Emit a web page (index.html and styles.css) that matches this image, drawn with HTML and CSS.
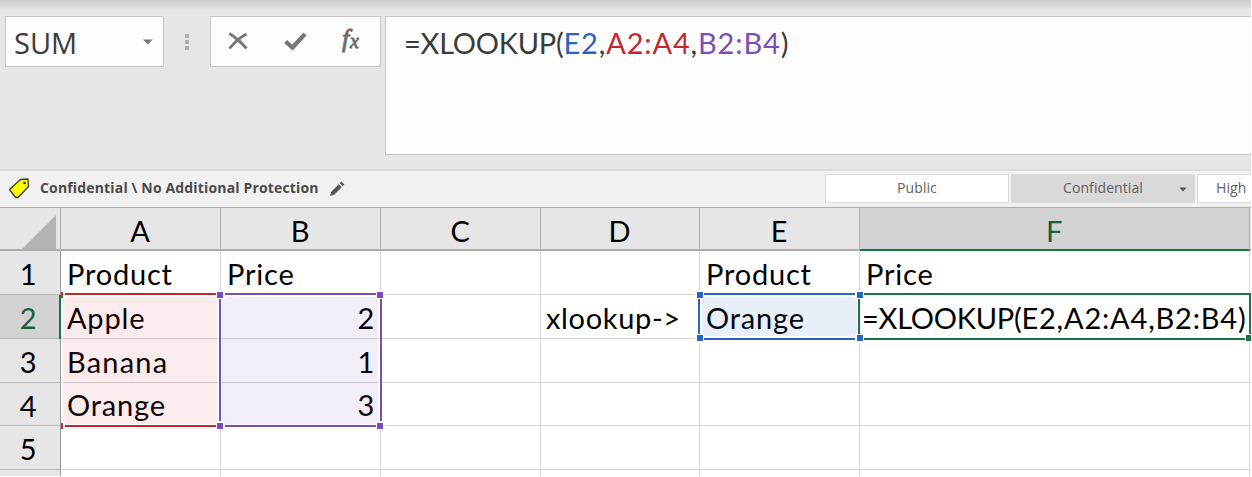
FILE: index.html
```html
<!DOCTYPE html>
<html lang="en">
<head>
<meta charset="utf-8">
<title>XLOOKUP</title>
<link rel="stylesheet" href="styles.css">
</head>
<body>
<div class="app">
  <div class="formula-area">
    <div class="name-box"><span class="name-text">SUM</span>
      <svg class="caret" width="10" height="6" viewBox="0 0 10 6"><path d="M0 0.5H9.6L4.8 5.5Z" fill="#777"/></svg>
    </div>
    <div class="dots"><i></i><i></i><i></i></div>
    <div class="fx-buttons">
      <svg width="168" height="49" viewBox="0 0 168 49">
        <g fill="none" stroke="#767676">
          <path d="M18.500 16.500Q27 22 35.500 31.500" stroke-width="2.800"/>
          <path d="M35.500 17Q26 22 18.500 31.500" stroke-width="2.800"/>
          <path d="M74.500 24.500L81.500 30.500L94 17" stroke-width="4.200"/>
        </g>
        <text class="fx-f" x="131" y="30">f</text><text class="fx-x" x="139" y="31">x</text>
      </svg>
    </div>
    <div class="formula-bar"><span class="formula"><span class="fn">=XLOOKUP(</span><span class="blue">E2</span>,<span class="red">A2:A4</span>,<span class="purple">B2:B4</span>)</span></div>
  </div>
  <div class="label-bar">
    <svg class="tag" width="22" height="22" viewBox="0 0 22 22"><path d="M1.500 11.500L12.500 1.500L20 1L20.500 8.500L10 19.500L7.500 19.500Z" fill="#ff0" stroke="#3c3c28" stroke-width="1.300" stroke-linejoin="round"/><circle cx="16.500" cy="5" r="1.300" fill="#333"/></svg>
    <span class="label-name">Confidential \ No Additional Protection</span>
    <svg class="pencil" width="16" height="16" viewBox="0 0 16 16"><path d="M1 15L2.200 10.800L9.800 3.200L12.800 6.200L5.200 13.800ZM10.700 2.300L12.500 0.600L15.400 3.500L13.700 5.300Z" fill="#555"/></svg>
    <div class="labels">
      <div class="label">Public</div>
      <div class="label active">Confidential<svg class="small-caret" width="8" height="5" viewBox="0 0 8 5"><path d="M0.500 0.500H7.500L4 4.500Z" fill="#555"/></svg></div>
      <div class="label last">High</div>
    </div>
  </div>
  <div class="sheet">
    <div class="corner"><svg width="34" height="34" viewBox="0 0 34 34"><path d="M0 34H34V0Z" fill="#b3b3b3"/></svg></div>
    <div class="col">A</div><div class="col">B</div><div class="col">C</div><div class="col">D</div><div class="col">E</div><div class="col current">F</div><div class="col"></div>
    <div class="row">1</div><div class="cell">Product</div><div class="cell">Price</div><div class="cell"></div><div class="cell"></div><div class="cell">Product</div><div class="cell">Price</div><div class="cell"></div>
    <div class="row current">2</div><div class="cell">Apple</div><div class="cell num">2</div><div class="cell"></div><div class="cell lookup">xlookup-&gt;</div><div class="cell">Orange</div><div class="cell edit"><span class="fn">=XLOOKUP(</span>E2,A2:A4,B2:B4)</div><div class="cell"></div>
    <div class="row">3</div><div class="cell wide">Banana</div><div class="cell num">1</div><div class="cell"></div><div class="cell"></div><div class="cell"></div><div class="cell"></div><div class="cell"></div>
    <div class="row">4</div><div class="cell">Orange</div><div class="cell num">3</div><div class="cell"></div><div class="cell"></div><div class="cell"></div><div class="cell"></div><div class="cell"></div>
    <div class="row">5</div><div class="cell"></div><div class="cell"></div><div class="cell"></div><div class="cell"></div><div class="cell"></div><div class="cell"></div><div class="cell"></div>
    <div class="row"></div><div class="cell"></div><div class="cell"></div><div class="cell"></div><div class="cell"></div><div class="cell"></div><div class="cell"></div><div class="cell"></div>
    <svg class="ranges" width="1252" height="270" viewBox="0 207 1252 270" shape-rendering="crispEdges">
      <g fill="none" stroke="#fff">
        <path d="M62 295.500H218M62 424.500H218M62.500 296V424M217.500 296V424M222 295.500H379M222 424.500H379M221.500 296V424M378.500 296V424M702 295.500H857M702 336.500H857M701.500 296V336M857.500 296V336"/>
      </g>
      <path d="M63 297H217V424H63Z" fill="#c8282d" fill-opacity=".09"/>
      <path d="M222 297H378V424H222Z" fill="#7344b4" fill-opacity=".09"/>
      <path d="M702 297H857V336H702Z" fill="#2864c8" fill-opacity=".1"/>
      <path d="M62 293H381V295H62ZM62 425H381V427H62Z" fill="#c1272d"/>
      <path d="M220 293H381V295H220ZM220 425H381V427H220ZM219 294H221V426H219ZM380 294H382V426H380Z" fill="#7b4db8"/>
      <path d="M860 293H1251V295H860ZM860 338H1251V340H860ZM858 296H860V338H858ZM1249 293H1251V338H1249Z" fill="#1a7340"/>
      <path d="M700 293H860V295H700ZM700 338H860V340H700ZM698 294H700V339H698Z" fill="#2a63c4"/>
      <g fill="#fff">
        <path d="M61 290H65V299H61ZM61 421H65V430H61ZM216 290H225V299H216ZM376 290H385V299H376ZM216 421H225V430H216ZM376 421H385V430H376ZM695 290H704V299H695ZM855 290H864V299H855ZM695 334H704V343H695ZM855 334H864V343H855ZM1245 334H1252V343H1245Z"/>
      </g>
      <path d="M61 292H63V298H61ZM61 423H63V429H61Z" fill="#c1272d"/>
      <path d="M217 292H223V298H217ZM377 292H383V298H377ZM217 423H223V429H217ZM377 423H383V429H377Z" fill="#7b4db8"/>
      <path d="M697 292H703V298H697ZM857 292H863V298H857ZM697 335H703V341H697ZM857 335H863V341H857Z" fill="#2a63c4"/>
      <path d="M1246 335H1252V341H1246Z" fill="#1a7340"/>
      <path d="M59 295H61V339H59Z" fill="#1a7340"/>
    </svg>
  </div>
</div>
</body>
</html>
```
FILE: styles.css
```css
* { box-sizing: border-box; }
body { margin: 0; background: #fff; overflow: hidden; }
svg { display: block; flex: none; }
.app { width: 1251px; height: 476px; overflow: hidden; display: flex; flex-direction: column; font-family: Lato, sans-serif; }
.formula-area { height: 169px; flex: none; display: flex; align-items: flex-start; padding: 16px 0 0 5px; background: linear-gradient(#cdcdcd, #d2d2d2 3px, #e6e6e6 10px); }
.name-box { width: 159px; height: 51px; display: flex; align-items: center; justify-content: space-between; padding: 0 10px 0 8px; border: 1px solid #c6c6c6; background: #fdfdfd; }
.name-text { font: 29px/49px "Open Sans", sans-serif; color: #3b3b3b; padding-top: 2px; }
.dots { width: 46px; height: 51px; padding: 18px 0 0 21px; display: flex; flex-direction: column; gap: 2px; }
.dots i { width: 4px; height: 4px; background: #b0b0b0; }
.fx-buttons { width: 171px; height: 51px; border: 1px solid #c6c6c6; background: #fdfdfd; }
.fx-f { font: italic 26px "Liberation Serif", serif; fill: #6c6c6c; stroke: #6c6c6c; stroke-width: .9px; }
.fx-x { font: italic 20px "Liberation Serif", serif; fill: #6c6c6c; stroke: #6c6c6c; stroke-width: .9px; }
.formula-bar { flex: 1; height: 139px; margin-left: 4px; padding: 5px 0 0 18px; border: 1px solid #c6c6c6; border-right: 0; background: #fdfdfd; }
.formula { font-size: 29px; line-height: 42px; letter-spacing: .85px; color: #3b3b3b; white-space: nowrap; }
.fn { letter-spacing: -.25px; }
.blue { color: #2a63c4; }
.red { color: #c1272d; }
.purple { color: #7b4db8; }
.label-bar { height: 38px; flex: none; display: flex; align-items: center; border-top: 2px solid #dcdcdc; background: #f1f1f1; font-family: "Open Sans", sans-serif; padding: 0 0 1px 8px; }
.label-name { width: 278px; margin-left: 10px; padding-bottom: 2px; font-size: 14px; font-weight: 700; letter-spacing: .16px; color: #4a4a4a; white-space: nowrap; }
.pencil { margin-left: 11px; }
.labels { margin-left: auto; width: 426px; display: flex; gap: 2px; }
.label { width: 184px; flex: none; height: 29px; position: relative; display: flex; align-items: center; justify-content: center; padding-bottom: 2px; border: 1px solid #dcdcdc; background: #fff; color: #5f5f5f; font-size: 14px; letter-spacing: .08px; }
.label.active { background: #d9d9d9; }
.label.last { justify-content: flex-start; width: 55px; padding-left: 18px; }
.small-caret { position: absolute; right: 7px; top: 12px; }
.sheet { position: relative; height: 270px; flex: none; display: grid; grid-template-columns: 61px 160px 160px 160px 159px 160px 390px 2px; grid-template-rows: 44px 44px 44px 44px 43px 44px 7px; font-size: 29px; letter-spacing: .8px; color: #000; overflow: hidden; }
.corner, .col { border-top: 1px solid #a6abb5; border-right: 1px solid #ababab; border-bottom: 2px solid #ababab; background: #e6e6e6; }
.corner { padding: 7px 0 0 22px; }
.col { display: flex; justify-content: center; align-items: center; padding-top: 4px; }
.col.current { background: #d2d2d2; color: #17603a; border-bottom-color: #1a7340; }
.row { display: flex; justify-content: center; align-items: center; padding: 2px 3px 0 0; border-right: 1px solid #999; border-bottom: 1px solid #b8b8b8; background: #e6e6e6; overflow: hidden; }
.row.current { background: #d2d2d2; color: #17603a; }
.cell { display: flex; align-items: center; padding: 1px 6px 0; border-right: 1px solid #d4d4d4; border-bottom: 1px solid #d4d4d4; white-space: nowrap; overflow: hidden; }
.num { justify-content: flex-end; padding-right: 5px; }
.wide { letter-spacing: 1.2px; }
.lookup { padding-left: 5px; letter-spacing: .65px; }
.edit { padding-left: 2px; padding-right: 0; }
.ranges { position: absolute; left: 0; top: 0; }
```
